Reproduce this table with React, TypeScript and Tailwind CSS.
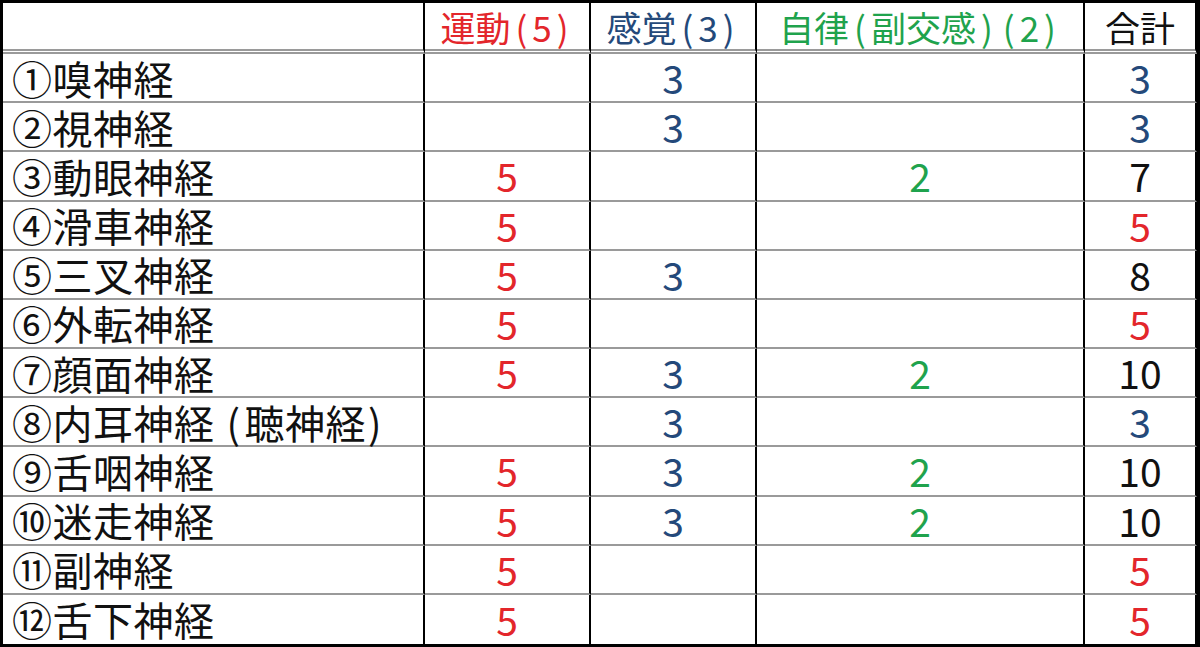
const RED = "text-[#e3262b]";
const BLUE = "text-[#24497a]";
const GREEN = "text-[#1fa34d]";
const BLACK = "text-[#111]";

type Row = {
  no: string;
  name: string;
  alt?: string;
  motor?: number;
  sensory?: number;
  auto?: number;
  total: number;
  totalColor: string;
};

const ROWS: Row[] = [
  { no: "①", name: "嗅神経", sensory: 3, total: 3, totalColor: BLUE },
  { no: "②", name: "視神経", sensory: 3, total: 3, totalColor: BLUE },
  { no: "③", name: "動眼神経", motor: 5, auto: 2, total: 7, totalColor: BLACK },
  { no: "④", name: "滑車神経", motor: 5, total: 5, totalColor: RED },
  { no: "⑤", name: "三叉神経", motor: 5, sensory: 3, total: 8, totalColor: BLACK },
  { no: "⑥", name: "外転神経", motor: 5, total: 5, totalColor: RED },
  { no: "⑦", name: "顔面神経", motor: 5, sensory: 3, auto: 2, total: 10, totalColor: BLACK },
  { no: "⑧", name: "内耳神経", alt: "聴神経", sensory: 3, total: 3, totalColor: BLUE },
  { no: "⑨", name: "舌咽神経", motor: 5, sensory: 3, auto: 2, total: 10, totalColor: BLACK },
  { no: "⑩", name: "迷走神経", motor: 5, sensory: 3, auto: 2, total: 10, totalColor: BLACK },
  { no: "⑪", name: "副神経", motor: 5, total: 5, totalColor: RED },
  { no: "⑫", name: "舌下神経", motor: 5, total: 5, totalColor: RED },
];

const FONT = "font-['Noto_Sans_CJK_JP','Noto_Sans_CJK_SC',sans-serif]";

// Excel-like proportional brackets: a little air on each side
function P({ c }: { c: string }) {
  return <span className="mx-[5px]">{c}</span>;
}

const HEAD = "border-r-2 border-r-black border-b-[5px] border-b-[#9a9a9a] border-double flex items-center justify-center text-[35px] leading-none";
const CELL = "border-r-2 border-r-black flex items-center justify-center text-[39px] leading-none";

export default function App() {
  return (
    <div className={`w-[1200px] h-[647px] bg-white ${FONT}`}>
      <div className="border-[3px] border-black h-full grid grid-cols-[422px_166px_166px_328px_1fr] grid-rows-[51px_repeat(12,1fr)]">
        {/* HEADER */}
        <div className={HEAD} />
        <div className={`${HEAD} ${RED}`}>
          運動<P c="(" />5<P c=")" />
        </div>
        <div className={`${HEAD} ${BLUE}`}>
          感覚<P c="(" />3<P c=")" />
        </div>
        <div className={`${HEAD} ${GREEN}`}>
          自律<P c="(" />副交感<P c=")" /><P c="(" />2<P c=")" />
        </div>
        <div className={`${HEAD} border-r-0 ${BLACK}`}>合計</div>

        {/* ROWS */}
        {ROWS.map((r, i) => {
          const bottom = i < ROWS.length - 1 ? "border-b-2 border-b-[#9a9a9a]" : "";
          return (
            <div key={r.no} className="contents">
              <div className={`border-r-2 border-r-black ${bottom} flex items-center pl-[9px] text-[40px] leading-[1.1] tracking-[0.5px] whitespace-nowrap ${BLACK}`}>
                {r.no + r.name}
                {r.alt && (
                  <>
                    <span className="ml-[12px] mr-[4px]">(</span>
                    {r.alt}
                    <span className="ml-[2px]">)</span>
                  </>
                )}
              </div>
              <div className={`${CELL} ${bottom} ${RED}`}>{r.motor ?? ""}</div>
              <div className={`${CELL} ${bottom} ${BLUE}`}>{r.sensory ?? ""}</div>
              <div className={`${CELL} ${bottom} ${GREEN}`}>{r.auto ?? ""}</div>
              <div className={`${CELL} border-r-0 ${bottom} ${r.totalColor}`}>{r.total}</div>
            </div>
          );
        })}
      </div>
    </div>
  );
}
